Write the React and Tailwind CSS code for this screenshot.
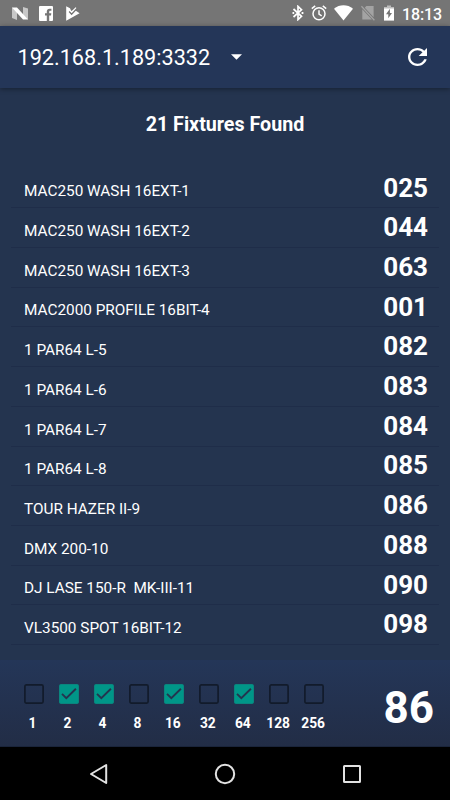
import { useState } from "react";

const fixtures = [
  { name: "MAC250 WASH 16EXT-1", address: "025" },
  { name: "MAC250 WASH 16EXT-2", address: "044" },
  { name: "MAC250 WASH 16EXT-3", address: "063" },
  { name: "MAC2000 PROFILE 16BIT-4", address: "001" },
  { name: "1 PAR64 L-5", address: "082" },
  { name: "1 PAR64 L-6", address: "083" },
  { name: "1 PAR64 L-7", address: "084" },
  { name: "1 PAR64 L-8", address: "085" },
  { name: "TOUR HAZER II-9", address: "086" },
  { name: "DMX 200-10", address: "088" },
  { name: "DJ LASE 150-R  MK-III-11", address: "090" },
  { name: "VL3500 SPOT 16BIT-12", address: "098" },
];

const bits = [1, 2, 4, 8, 16, 32, 64, 128, 256];

function StatusBar() {
  return (
    <div className="flex h-[26px] shrink-0 items-center bg-[#757575] pl-3 pr-2 text-white">
      <svg width="16" height="13" viewBox="0 0 16 13" fill="currentColor">
        <path d="M0 0.5L5 3V13L0 11Z" opacity="0.6" />
        <path d="M11 0L16 1.5V12.5L11 10Z" opacity="0.6" />
        <path d="M0 0.5H5L16 12.5H11Z" />
      </svg>
      <svg className="ml-[11px]" width="14" height="15" viewBox="0 0 14 15" fill="currentColor">
        <path d="M1 0H13A1 1 0 0 1 14 1V14A1 1 0 0 1 13 15H10.2V9.5H12L12.3 7.3H10.2V6C10.2 5.2 10.5 4.8 11.3 4.8H12.4V2.7H10.6C8.8 2.7 7.8 3.8 7.8 5.5V7.3H6V9.5H7.8V15H1A1 1 0 0 1 0 14V1A1 1 0 0 1 1 0Z" />
      </svg>
      <svg className="ml-[13px]" width="14" height="15" viewBox="0 0 14 15">
        <path d="M0.2 0.3L4 2.2L5.4 5.3L8 3.5L13.6 7.2L0.2 14.8Z" fill="currentColor" />
        <path d="M3.2 5.6L5.6 8.1L10.8 2.6" fill="none" stroke="#757575" strokeWidth="1.5" />
        <path d="M4.6 5L5.7 6.1L10 1.6" fill="none" stroke="currentColor" strokeWidth="1.2" />
      </svg>

      <div className="ml-auto flex items-center">
        <svg width="12" height="16" viewBox="0 0 12 16" fill="none" stroke="currentColor" strokeWidth="1.7">
          <path d="M1.5 4L9.5 11.3L6 14.6V1.4L9.5 4.7L1.5 12" />
          <path d="M0.5 7.1H2.2V8.9H0.5ZM9.6 7.1H11.4V8.9H9.6Z" fill="currentColor" stroke="none" />
        </svg>
        <svg className="ml-[7px]" width="16" height="16" viewBox="0 0 16 16" fill="none" stroke="currentColor" strokeWidth="1.5">
          <circle cx="8" cy="8.8" r="6" />
          <path d="M0.8 3.7L4.2 0.9M15.2 3.7L11.8 0.9M8 5.3V9L10.7 10.8" />
        </svg>
        <svg className="ml-[7px]" width="19" height="16" viewBox="0 0 19 16" fill="currentColor">
          <path d="M0 3.7C5.5 -0.8 13.5 -0.8 19 3.7L9.5 15.6Z" />
        </svg>
        <svg className="ml-2" width="14" height="16" viewBox="0 0 14 16">
          <path d="M5.3 1H12.6V12.2L3.8 2.8ZM1.3 4.2L10.9 14.5H1.3Z" fill="#a3a3a3" />
          <path d="M0.4 1.3L13.4 15.2" stroke="#a3a3a3" strokeWidth="1.3" />
        </svg>
        <svg className="ml-[9px]" width="10" height="16" viewBox="0 0 10 16">
          <path d="M0 2H10V15.6H0Z" fill="currentColor" />
          <path d="M3 0.4H7V2H10V3.4H0V2H3Z" fill="#bdbdbd" />
          <path d="M5.9 3.8L2 9.2H4.3V13.3L8 7.9H5.9Z" fill="#757575" />
        </svg>
        <span className="ml-[8px] pt-[3px] text-[16px] leading-6 font-medium tracking-[-0.1px]">18:13</span>
      </div>
    </div>
  );
}

function Header() {
  return (
    <header className="z-10 flex h-[61.5px] shrink-0 items-center bg-[#243658] pl-[17.5px] pr-[23px] text-white shadow-[0_1px_5px_rgba(0,0,0,0.4)]">
      <button type="button" className="flex items-center">
        <span className="pt-[3px] text-[21.65px] leading-8">192.168.1.189:3332</span>
        <svg className="ml-[21px]" width="11" height="6" viewBox="0 0 11 6" fill="currentColor">
          <path d="M0 0.2H11L5.5 5.8Z" />
        </svg>
      </button>
      <button type="button" className="ml-auto">
        <svg width="19" height="18" viewBox="4 4 16 16" preserveAspectRatio="none" fill="currentColor">
          <path d="M17.65 6.35C16.2 4.9 14.21 4 12 4c-4.42 0-7.99 3.58-7.99 8s3.57 8 7.99 8c3.73 0 6.84-2.55 7.73-6h-2.08c-.82 2.33-3.04 4-5.65 4-3.31 0-6-2.69-6-6s2.69-6 6-6c1.66 0 3.14.69 4.22 1.78L13 11h7V4l-2.35 2.35z" />
        </svg>
      </button>
    </header>
  );
}

function BitToggle({ bit, checked, onToggle }) {
  return (
    <button type="button" onClick={onToggle} className="flex w-[35px] flex-col items-center">
      <svg width="20" height="20" viewBox="0 0 20 20">
        {checked ? (
          <>
            <rect x="0.5" y="0.5" width="19" height="19" rx="1.2" fill="#009688" stroke="#0b857e" />
            <path d="M3 9.8L7.3 14.2L16.9 4.7" fill="none" stroke="#24344f" strokeWidth="1.9" />
          </>
        ) : (
          <rect x="0.9" y="0.9" width="18.2" height="18.2" rx="1.5" fill="none" stroke="#121b2b" strokeWidth="1.7" />
        )}
      </svg>
      <span className="mr-[1.5px] mt-[9px] scale-x-[0.9] text-[15.3px] leading-5 font-bold">{bit}</span>
    </button>
  );
}

export default function App() {
  const [address, setAddress] = useState(86);

  return (
    <div className="flex h-[800px] w-[450px] flex-col overflow-hidden bg-[#24344f] font-['Roboto',sans-serif] text-white">
      <StatusBar />
      <Header />

      <main className="flex h-[572.5px] shrink-0 flex-col">
        <h1 className="mt-[23.5px] text-center text-[19.7px] leading-7 font-bold">21 Fixtures Found</h1>
        <ul className="mx-[11px] mt-[29.8px]">
          {fixtures.map((f) => (
            <li
              key={f.name}
              className="flex h-[39.68px] items-end justify-between border-b border-[#1f2d49] pl-[13px] pr-[11px]"
            >
              <span className="mb-[6px] text-[15.33px] leading-5 whitespace-pre">{f.name}</span>
              <span className="mb-[3.7px] text-[26px] leading-8 font-bold">{f.address}</span>
            </li>
          ))}
        </ul>
      </main>

      <footer className="flex h-[87px] shrink-0 justify-between border-b border-[#1a243a] bg-linear-to-b from-[#243658] to-[#222d46] pl-4 pr-[16px]">
        <div className="flex pt-6">
          {bits.map((bit) => (
            <BitToggle
              key={bit}
              bit={bit}
              checked={(address & bit) !== 0}
              onToggle={() => setAddress(address ^ bit)}
            />
          ))}
        </div>
        <span className="mt-[22px] text-[44px] leading-[52px] font-bold">{address}</span>
      </footer>

      <nav className="flex h-[53px] shrink-0 items-center justify-between bg-black pl-[89px] pr-[88px]">
        <svg width="20" height="22" viewBox="0 0 20 22" fill="none" stroke="#e2e2e2" strokeWidth="2" strokeLinejoin="round">
          <path d="M2 11L17.2 2V20Z" />
        </svg>
        <svg className="mr-px" width="22" height="22" viewBox="0 0 22 22" fill="none" stroke="#e2e2e2" strokeWidth="2">
          <circle cx="11" cy="11" r="9.2" />
        </svg>
        <svg width="20" height="20" viewBox="0 0 20 20" fill="none" stroke="#e2e2e2" strokeWidth="2">
          <rect x="2" y="2" width="16" height="16" rx="0.5" />
        </svg>
      </nav>
    </div>
  );
}
